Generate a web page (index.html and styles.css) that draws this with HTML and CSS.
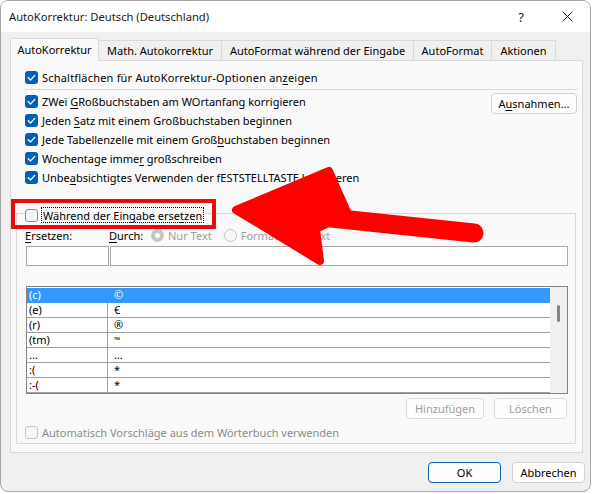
FILE: index.html
```html
<!DOCTYPE html>
<html lang="de">
<head>
<meta charset="utf-8">
<title>AutoKorrektur</title>
<link rel="stylesheet" href="styles.css">
</head>
<body>
<div class="window">
  <div class="titlebar">
    <span class="title">AutoKorrektur: Deutsch (Deutschland)</span>
    <span class="tb-btn help">?</span>
    <span class="tb-btn close"><svg width="11" height="11" viewBox="0 0 11 11"><path d="M0.5 0.5L10.5 10.5M10.5 0.5L0.5 10.5" stroke="#1b1b1b" stroke-width="1"/></svg></span>
  </div>
  <div class="content">
    <div class="tabs">
      <div class="tab active w1">AutoKorrektur</div>
      <div class="tab w2">Math. Autokorrektur</div>
      <div class="tab w3">AutoFormat während der Eingabe</div>
      <div class="tab w4">AutoFormat</div>
      <div class="tab w5">Aktionen</div>
    </div>
    <div class="panel">
      <div class="opt first"><span class="cb on"><svg width="13" height="13" viewBox="0 0 13 13"><path d="M3.2 6.8L5.5 9L9.8 4.4" fill="none" stroke="#fff" stroke-width="1.3" stroke-linecap="round" stroke-linejoin="round"/></svg></span><span class="wide">Schaltflächen für AutoKorrektur-Optionen an<u>z</u>eigen</span></div>
      <div class="sep"></div>
      <div class="opts">
        <div class="opt-list">
          <div class="opt"><span class="cb on"><svg width="13" height="13" viewBox="0 0 13 13"><path d="M3.2 6.8L5.5 9L9.8 4.4" fill="none" stroke="#fff" stroke-width="1.3" stroke-linecap="round" stroke-linejoin="round"/></svg></span><span>ZWei <u>G</u>Roßbuchstaben am WOrtanfang korrigieren</span></div>
          <div class="opt"><span class="cb on"><svg width="13" height="13" viewBox="0 0 13 13"><path d="M3.2 6.8L5.5 9L9.8 4.4" fill="none" stroke="#fff" stroke-width="1.3" stroke-linecap="round" stroke-linejoin="round"/></svg></span><span>Jeden <u>S</u>atz mit einem Großbuchstaben beginnen</span></div>
          <div class="opt"><span class="cb on"><svg width="13" height="13" viewBox="0 0 13 13"><path d="M3.2 6.8L5.5 9L9.8 4.4" fill="none" stroke="#fff" stroke-width="1.3" stroke-linecap="round" stroke-linejoin="round"/></svg></span><span>Jede Tabellenzelle mit einem Groß<u>b</u>uchstaben beginnen</span></div>
          <div class="opt"><span class="cb on"><svg width="13" height="13" viewBox="0 0 13 13"><path d="M3.2 6.8L5.5 9L9.8 4.4" fill="none" stroke="#fff" stroke-width="1.3" stroke-linecap="round" stroke-linejoin="round"/></svg></span><span>Wochentage imme<u>r</u> großschreiben</span></div>
          <div class="opt"><span class="cb on"><svg width="13" height="13" viewBox="0 0 13 13"><path d="M3.2 6.8L5.5 9L9.8 4.4" fill="none" stroke="#fff" stroke-width="1.3" stroke-linecap="round" stroke-linejoin="round"/></svg></span><span>Unbe<u>a</u>bsichtigtes Verwenden der fESTSTELLTASTE korrigieren</span></div>
        </div>
        <div class="btn exc">A<u>u</u>snahmen...</div>
      </div>
      <fieldset class="group">
        <legend class="legend"><span class="legend-inner"><span class="cb off"></span><span class="focus">Während der Eingabe erse<u>t</u>zen</span></span></legend>
        <div class="labels">
          <span class="lbl-rep"><u>E</u>rsetzen:</span>
          <span class="lbl-by"><u>D</u>urch:</span>
          <span class="radio sel"></span><span class="dis-text">Nur Text</span>
          <span class="radio"></span><span class="dis-text">Formatierter Text</span>
        </div>
        <div class="inputs"><div class="input in1"></div><div class="input in2"></div></div>
        <div class="list">
          <div class="rows">
            <div class="row selected"><span class="c1">(c)</span><span class="c2">©</span></div>
            <div class="row"><span class="c1">(e)</span><span class="c2">€</span></div>
            <div class="row"><span class="c1">(r)</span><span class="c2">®</span></div>
            <div class="row"><span class="c1">(tm)</span><span class="c2 small">™</span></div>
            <div class="row"><span class="c1">...</span><span class="c2">…</span></div>
            <div class="row"><span class="c1">:(</span><span class="c2">*</span></div>
            <div class="row"><span class="c1">:-(</span><span class="c2">*</span></div>
          </div>
          <div class="scroll"><div class="thumb"></div></div>
        </div>
        <div class="actions">
          <div class="btn disabled add">Hinzufügen</div>
          <div class="btn disabled del">Löschen</div>
        </div>
        <div class="opt auto"><span class="cb off dis"></span><span>Automatisch Vorschläge aus dem Wörterbuch verwenden</span></div>
      </fieldset>
    </div>
    <div class="footer">
      <div class="btn ok">OK</div>
      <div class="btn cancel">Abbrechen</div>
    </div>
  </div>
</div>
<svg class="overlay" width="594" height="494" viewBox="0 0 594 494">
  <rect x="13" y="201" width="201" height="26" fill="none" stroke="#ea0a0f" stroke-width="4"/>
  <line x1="312" y1="216" x2="474" y2="233" stroke="#ff0000" stroke-width="19" stroke-linecap="round"/>
  <polygon points="236,210 329,171 348,214 316,229 320,261" fill="#ff0000" stroke="#ff0000" stroke-width="8" stroke-linejoin="round"/>
</svg>
</body>
</html>
```

FILE: styles.css
```css
* { box-sizing: border-box; }

body {
  margin: 0;
  background: #ffffff;
  font-family: "Noto Sans", "Segoe UI", sans-serif;
  font-size: 11px;
  color: #000;
}

u { text-decoration-thickness: 1px; text-underline-offset: 2px; }

.window {
  width: 591px;
  height: 492px;
  border: 1px solid #a6a6a6;
  border-radius: 8px;
  overflow: hidden;
  background: #f0f0f0;
  display: flex;
  flex-direction: column;
}

.titlebar {
  height: 31px;
  flex: none;
  background: #ffffff;
  display: flex;
  align-items: center;
  padding-left: 8px;
  font-size: 11.2px;
  color: #1a1a1a;
}
.title { flex: 1; }
.tb-btn {
  width: 46px;
  height: 31px;
  display: flex;
  align-items: center;
  justify-content: center;
}
.help { font-size: 13px; }

.content {
  flex: 1;
  padding: 6px 0 0 9px;
  display: flex;
  flex-direction: column;
}

.tabs {
  display: flex;
  align-items: flex-end;
  height: 22px;
}
.tab {
  height: 20px;
  display: flex;
  align-items: center;
  justify-content: center;
  border: 1px solid #d9d9d9;
  border-left: none;
  border-bottom: none;
  background: #f0f0f0;
}
.tab.active {
  height: 23px;
  border-left: 1px solid #d9d9d9;
  background: #f9f9f9;
  margin-bottom: -1px;
  padding-bottom: 2px;
  position: relative;
  z-index: 1;
}
.w1 { width: 89px; }
.w2 { width: 123px; }
.w3 { width: 192px; }
.w4 { width: 78px; }
.w5 { width: 64px; }

.panel {
  width: 573px;
  background: #f9f9f9;
  border: 1px solid #d9d9d9;
  display: flex;
  flex-direction: column;
}

.opt {
  height: 19px;
  display: flex;
  align-items: center;
  gap: 4px;
  white-space: nowrap;
}
.opt.first { margin: 7px 0 0 14px; }
.wide { letter-spacing: 0.2px; }

.cb {
  width: 13px;
  height: 13px;
  border-radius: 3px;
  flex: none;
  display: block;
}
.cb svg { display: block; }
.cb.on { background: #005fb8; }
.cb.off { border: 1px solid #8b8b8b; background: #f6f6f6; }
.cb.off.dis { border-color: #c6c6c6; background: #f7f7f7; }

.sep {
  height: 1px;
  background: #dadada;
  margin: 2px 4px 0 14px;
}

.opts {
  display: flex;
  align-items: flex-start;
  margin: 2px 5px 0 14px;
}
.opt-list { flex: 1; }

.btn {
  height: 21px;
  border: 1px solid #d1d1d1;
  border-radius: 4px;
  background: #fdfdfd;
  display: flex;
  align-items: center;
  justify-content: center;
}
.exc { width: 86px; margin-top: 1px; }

.group {
  margin: 16px 6px 8px 5px;
  padding: 0 7px 3px 9px;
  border: 1px solid #d9d9d9;
  min-width: 0;
}
.legend {
  padding: 4px 2px 0 0;
  margin-left: -1px;
}
.legend-inner {
  display: flex;
  align-items: center;
  gap: 3px;
  height: 16px;
}
.focus {
  border: 1px dotted #000;
  padding: 0 1px;
  line-height: 13px;
  height: 16px;
  display: flex;
  align-items: center;
}

.labels {
  display: flex;
  align-items: center;
  height: 15px;
  margin-top: 5px;
}
.lbl-rep { width: 84px; margin-left: -1px; }
.lbl-by { width: 42px; }
.radio {
  width: 13px;
  height: 13px;
  border-radius: 50%;
  border: 1px solid #c4c4c4;
  background: #f7f7f7;
  margin-right: 4px;
  flex: none;
}
.radio.sel {
  border: 4px solid #c6c6c6;
  background: #ffffff;
}
.dis-text { color: #a0a0a0; margin-right: 12px; }

.inputs {
  display: flex;
  gap: 1px;
  margin-top: 3px;
}
.input {
  height: 20px;
  background: #fff;
  border: 1px solid #a9a9a9;
}
.in1 { width: 83px; }
.in2 { flex: 1; }

.list {
  margin-top: 20px;
  height: 108px;
  border: 1px solid #828282;
  background: #fff;
  display: flex;
  padding-top: 1px;
}
.rows { flex: 1; }
.row {
  height: 15px;
  display: grid;
  grid-template-columns: 81px 1fr;
  border-bottom: 1px solid #a0a0a0;
  line-height: 14px;
}
.row .c1 {
  border-right: 1px solid #a0a0a0;
  padding-left: 2px;
}
.row .c2 { padding-left: 6px; }
.row .small { font-size: 8px; }
.row.selected {
  background: #3399ff;
  color: #fff;
  border-bottom-color: #3399ff;
}
.row.selected .c1 { border-right-color: #3399ff; }
.scroll {
  width: 17px;
  background: #f0f0f0;
  margin-top: -1px;
  display: flex;
  justify-content: center;
  padding-top: 18px;
}
.thumb {
  width: 3px;
  height: 17px;
  background: #858585;
  border-radius: 2px;
}

.actions {
  display: flex;
  justify-content: flex-end;
  gap: 10px;
  margin-top: 4px;
  padding-right: 1px;
}
.btn.disabled { color: #a0a0a0; border-color: #dadada; }
.add { width: 78px; }
.del { width: 73px; }

.opt.auto {
  height: 15px;
  margin-top: 6px;
  margin-left: -1px;
  color: #8c8c8c;
}

.footer {
  display: flex;
  justify-content: flex-end;
  gap: 11px;
  margin-top: 9px;
  padding-right: 5px;
}
.ok { width: 73px; border-color: #0a64b4; }
.cancel { width: 73px; }

.overlay {
  position: absolute;
  left: 0;
  top: 0;
  pointer-events: none;
}
```
